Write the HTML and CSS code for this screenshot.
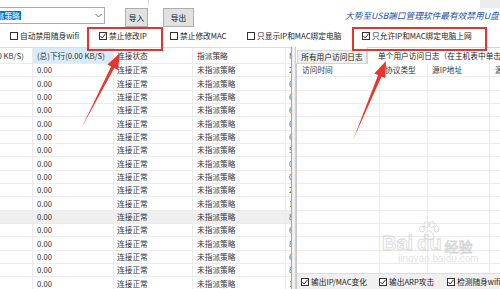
FILE: index.html
```html
<!DOCTYPE html>
<html lang="zh-CN">
<head>
  <meta charset="UTF-8" />
  <title>局域网主机监控</title>
  <link rel="stylesheet" href="styles.css">
</head>
<body>
  <div class="janela">
    <div class="faixa-topo"><span class="faixa-sep"></span><span class="faixa-canto"></span></div>

    <div class="ferramentas">
      <div class="combo">
        <span class="combo-texto">指派策略</span>
        <svg class="combo-seta" width="7" height="5" viewBox="0 0 7 5"><polyline points="0.5,1 3.5,4 6.5,1" fill="none" stroke="#6d6d6d" stroke-width="1"/></svg>
      </div>
      <button class="btn btn-importar">导入</button>
      <button class="btn btn-exportar">导出</button>
      <span class="slogan">大势至USB端口管理软件最有效禁用U盘</span>
    </div>

    <div class="opcoes">
      <label class="opcao op-wifi"><span class="cb"></span>自动禁用随身wifi</label>
      <label class="opcao op-ip marcado"><span class="cb"><svg width="6" height="6" viewBox="0 0 6 6"><polyline points="0.4,3 2.3,5 5.6,0.6" fill="none" stroke="#333" stroke-width="1"/></svg></span>禁止修改IP</label>
      <label class="opcao op-mac"><span class="cb"></span>禁止修改MAC</label>
      <label class="opcao op-mostrar"><span class="cb"></span>只显示IP和MAC绑定电脑</label>
      <label class="opcao op-somente marcado"><span class="cb"><svg width="6" height="6" viewBox="0 0 6 6"><polyline points="0.4,3 2.3,5 5.6,0.6" fill="none" stroke="#333" stroke-width="1"/></svg></span>只允许IP和MAC绑定电脑上网</label>
    </div>

    <div class="principal">
      <div class="hosts">
        <div class="grade-hosts">
          <div class="linha cabecalho">
            <span class="c c1">(总)上行(0.00 KB/S)</span>
            <span class="c c2 ordenado">(总)下行(0.00 KB/S)</span>
            <span class="c c3">连接状态</span>
            <span class="c c4">指派策略</span>
            <span class="c c5">M</span>
          </div>
          <div id="linhasHosts"></div>
        </div>
      </div>

      <div class="divisor"></div>

      <div class="logs">
        <div class="abas">
          <span class="aba">所有用户访问日志</span>
          <span class="aba ativa">单个用户访问日志（在主机表中单击主机查看）</span>
        </div>
        <div class="corpo-log">
          <div class="linha cabecalho-log">
            <span class="l l1">访问时间</span>
            <span class="l l2">协议类型</span>
            <span class="l l3">源IP地址</span>
            <span class="l l4">源端口</span>
          </div>
          <div id="linhasLog"></div>
        </div>
        <div class="barra-log">
          <label class="opcao ob-1"><span class="cb"><svg width="6" height="6" viewBox="0 0 6 6"><polyline points="0.4,3 2.3,5 5.6,0.6" fill="none" stroke="#333" stroke-width="1"/></svg></span>输出IP/MAC变化</label>
          <label class="opcao ob-2"><span class="cb"><svg width="6" height="6" viewBox="0 0 6 6"><polyline points="0.4,3 2.3,5 5.6,0.6" fill="none" stroke="#333" stroke-width="1"/></svg></span>输出ARP攻击</label>
          <label class="opcao ob-3"><span class="cb"><svg width="6" height="6" viewBox="0 0 6 6"><polyline points="0.4,3 2.3,5 5.6,0.6" fill="none" stroke="#333" stroke-width="1"/></svg></span>检测随身wifi</label>
        </div>
      </div>
    </div>

    <!-- marca d'água -->
    <div class="marca">
      <div class="marca-logo">
        <span>Bai</span>
        <span class="marca-du">du<svg class="pata" width="22" height="20" viewBox="0 0 22 20">
          <g fill="none" stroke="#d8d8d8" stroke-width="1">
            <ellipse cx="4" cy="8" rx="2.5" ry="3"/>
            <ellipse cx="8.5" cy="3.5" rx="2.5" ry="3"/>
            <ellipse cx="14" cy="3.5" rx="2.5" ry="3"/>
            <ellipse cx="18.5" cy="8" rx="2.5" ry="3"/>
            <path d="M6 17 C6 12 9 10 11 10 C13 10 16 12 16 17 C14 19 8 19 6 17 Z"/>
          </g>
        </svg></span>
        <span class="marca-jy">经验</span>
      </div>
      <div class="marca-url">jingyan.baidu.com</div>
    </div>

    <!-- setas de destaque -->
    <svg class="setas" width="500" height="289" viewBox="0 0 500 289">
      <polygon points="82,127 114.3,68 118,70 120,53 107.4,64.5 111.1,66.4" fill="#e8352f"/>
      <polygon points="353,140 381.5,76.5 385.3,78.1 386,61 374.3,73.5 378.1,75.1" fill="#e8352f"/>
    </svg>
  </div>

  <script>
    const macs = ['2', '6', '6', '6', '6', '6', '5', '0', '0', '2', '1', '8', '6', '8', '6', '8', '1'];
    const linhasHosts = document.getElementById('linhasHosts');

    macs.forEach((m, i) => {
      const linha = document.createElement('div');
      linha.className = 'linha' + (i === 11 ? ' selecionada' : '');
      linha.innerHTML = `
        <span class="c c1">0.00</span>
        <span class="c c2">0.00</span>
        <span class="c c3">连接正常</span>
        <span class="c c4">未指派策略</span>
        <span class="c c5">${m}</span>
      `;
      linhasHosts.appendChild(linha);
    });

    const linhasLog = document.getElementById('linhasLog');
    for (let i = 0; i < 16; i++) {
      const linha = document.createElement('div');
      linha.className = 'linha';
      linha.innerHTML = '<span class="l l1"></span><span class="l l2"></span><span class="l l3"></span><span class="l l4"></span>';
      linhasLog.appendChild(linha);
    }
  </script>
</body>
</html>
```

FILE: styles.css
```css
:root {
  --grade: #ebebeb;
  --borda: #c9c9c9;
  --cinza-fundo: #f0f0f0;
  --vermelho: #e5332e;
  --texto: #222;
}
* {
  box-sizing: border-box;
}
body {
  margin: 0;
  background: #fff;
}
.janela {
  position: relative;
  width: 500px;
  height: 289px;
  overflow: hidden;
  background: #fff;
  color: var(--texto);
  font-family: "Noto Sans CJK SC", "Microsoft YaHei", sans-serif;
  font-size: 7.7px;
  line-height: 1;
}

/* faixa superior */
.faixa-topo {
  height: 7px;
  display: flex;
}
.faixa-sep {
  margin-left: 148px;
  width: 1px;
  height: 5px;
  background: #dadada;
}
.faixa-canto {
  margin-left: auto;
  width: 20px;
  height: 8px;
  background: #ececec;
}

/* barra de ferramentas */
.ferramentas {
  height: 20px;
  display: flex;
  align-items: flex-start;
}
.combo {
  flex: none;
  margin-left: -30px;
  width: 135px;
  height: 17px;
  border: 1px solid #ababab;
  display: flex;
  align-items: center;
  padding-left: 17px;
  padding-right: 2px;
}
.combo-texto {
  background: #0078d7;
  color: #fff;
  padding: 1px 1px;
}
.combo-seta {
  margin-left: auto;
}
.btn {
  flex: none;
  height: 19px;
  margin-top: 1px;
  padding: 0;
  border: 1px solid #adadad;
  background: #e1e1e1;
  font-family: inherit;
  font-size: 7.7px;
  color: #111;
}
.btn-importar {
  width: 23px;
  margin-left: 20px;
}
.btn-exportar {
  width: 31px;
  margin-left: 15px;
}
.slogan {
  flex: none;
  margin-left: 151px;
  line-height: 17px;
  font-size: 8.7px;
  font-style: italic;
  color: #1d4fae;
  white-space: nowrap;
}

/* opções */
.opcoes {
  height: 20px;
  display: flex;
  align-items: center;
  padding-left: 10px;
  padding-bottom: 3px;
}
.opcao {
  flex: none;
  position: relative;
  display: flex;
  align-items: center;
  gap: 2px;
  height: 10px;
  white-space: nowrap;
  color: #1a1a1a;
}
.op-wifi { width: 89px; }
.op-ip { width: 71px; }
.op-mac { width: 77px; }
.op-mostrar { width: 115px; }
.cb {
  flex: none;
  width: 8px;
  height: 8px;
  border: 1px solid #333;
  background: #fff;
  display: flex;
  align-items: center;
  justify-content: center;
}
.marcado::after {
  content: "";
  position: absolute;
  top: -3.5px;
  height: 20px;
  border: 2px solid var(--vermelho);
  pointer-events: none;
}
.op-ip::after {
  left: -12px;
  width: 72px;
}
.op-somente::after {
  left: -10px;
  width: 131px;
}

/* área principal */
.principal {
  height: 242px;
  display: flex;
}
.hosts {
  flex: none;
  width: 291px;
  overflow: hidden;
  border-top: 1px solid #dcdcdc;
}
.grade-hosts {
  margin-left: -48px;
  width: 345px;
}
.linha {
  display: flex;
  height: 13.333px;
  border-bottom: 1px solid var(--grade);
}
.linha.cabecalho {
  height: 16px;
}
.linha.selecionada {
  background: #efefef;
}
.c {
  flex: none;
  display: flex;
  align-items: center;
  padding-left: 4px;
  border-right: 1px solid var(--grade);
  white-space: nowrap;
  overflow: hidden;
  color: #333;
}
.c1 { width: 81px; }
.c2 { width: 81px; }
.c3 { width: 79px; padding-left: 3px; }
.c4 { width: 93px; }
.c5 { width: 11px; padding-left: 3px; color: #6b5a3e; }
.ordenado {
  background: #d9ebf9;
}

.divisor {
  flex: none;
  width: 5px;
  background: var(--cinza-fundo);
  border-left: 1px solid #a6a6a6;
  border-right: 1px solid #cfcfcf;
}

/* painel de logs */
.logs {
  flex: 1;
  min-width: 0;
  overflow: hidden;
  display: flex;
  flex-direction: column;
}
.abas {
  flex: none;
  height: 17px;
  display: flex;
  align-items: flex-end;
  border-bottom: 1px solid #d4d4d4;
}
.aba {
  flex: none;
  width: 70px;
  height: 13px;
  margin-left: 1px;
  display: flex;
  align-items: center;
  justify-content: center;
  background: var(--cinza-fundo);
  border: 1px solid #d4d4d4;
  border-bottom: none;
  white-space: nowrap;
}
.aba.ativa {
  width: 200px;
  height: 17px;
  margin-left: 0;
  margin-bottom: -1px;
  justify-content: flex-start;
  padding-left: 10px;
  padding-bottom: 1px;
  background: #fff;
}
.corpo-log {
  flex: 1;
  overflow: hidden;
  border-left: 1px solid var(--borda);
  background: #fff;
}
.l {
  flex: none;
  display: flex;
  align-items: center;
  padding-left: 5px;
  border-right: 1px solid var(--grade);
  white-space: nowrap;
  color: #333;
}
.l1 { width: 83px; }
.l2 { width: 48px; }
.l3 { width: 62px; padding-left: 4px; }
.l4 { width: 60px; }

.barra-log {
  flex: none;
  height: 16px;
  display: flex;
  align-items: center;
  padding-left: 4px;
  background: var(--cinza-fundo);
  border-left: 1px solid var(--borda);
  border-top: 1px solid #dcdcdc;
}
.ob-1 { width: 78px; }
.ob-2 { width: 68px; }

/* marca d'água */
.marca {
  position: absolute;
  left: 382px;
  top: 233px;
  pointer-events: none;
}
.marca-logo {
  display: flex;
  align-items: flex-end;
  font-family: "Liberation Sans", sans-serif;
  font-weight: bold;
  font-size: 20px;
  color: rgba(255, 255, 255, 0.4);
  -webkit-text-stroke: 0.8px #d6d6d6;
}
.marca-du {
  position: relative;
  margin-left: 4px;
}
.pata {
  position: absolute;
  left: 1px;
  top: -12px;
}
.marca-jy {
  margin-left: 3px;
  font-family: "Noto Sans CJK SC", sans-serif;
  font-size: 14px;
  font-weight: normal;
}
.marca-url {
  margin-top: 1px;
  margin-left: 16px;
  font-family: "Liberation Sans", sans-serif;
  font-size: 10px;
  color: #e4e4e4;
}

.setas {
  position: absolute;
  left: 0;
  top: 0;
  pointer-events: none;
}
```
